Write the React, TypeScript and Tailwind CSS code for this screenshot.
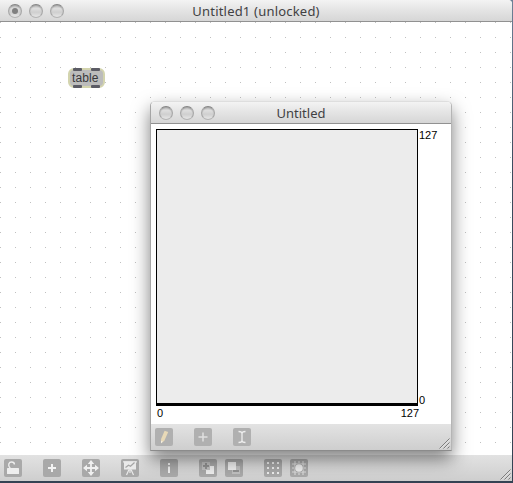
import type { ReactNode } from 'react';

function Lights({ active = false }: { active?: boolean }) {
  return (
    <div className="flex gap-[7px]">
      {[0, 1, 2].map((i) => (
        <span
          key={i}
          className="flex h-[14px] w-[14px] items-center justify-center rounded-full border border-t-[#858585] border-r-[#a6a6a6] border-b-[#b4b4b4] border-l-[#a6a6a6] bg-[linear-gradient(#b9b9b9,#dedede_30%,#cfcfcf_60%,#e6e6e6)] shadow-[inset_0_1px_1px_#a6a6a6]"
        >
          {active && i === 0 && <span className="h-[6px] w-[6px] rounded-full bg-[#808080]" />}
        </span>
      ))}
    </div>
  );
}

function TitleBar({ title, active, className }: { title: string; active?: boolean; className: string }) {
  return (
    <header
      className={
        'grid h-[22px] shrink-0 grid-cols-[1fr_auto_1fr] items-center border-b border-[#919191] bg-[linear-gradient(#f3f3f3,#e8e8e8_35%,#d6d6d6)] px-[8px] ' +
        className
      }
    >
      <Lights active={active} />
      <h1 className="whitespace-nowrap font-['Noto_Sans',sans-serif] text-[13px] leading-[20px] text-[#414143]">
        {title}
      </h1>
    </header>
  );
}

function Tile({ children, dim = false }: { children: ReactNode; dim?: boolean }) {
  return (
    <svg width="18" height="18" viewBox="0 0 18 18" className="block shrink-0" fill="none">
      <rect width="18" height="18" rx="2" fill={dim ? '#b0b0b0' : '#a9a9a9'} />
      {children}
    </svg>
  );
}

function Grip() {
  return (
    <svg width="12" height="12" viewBox="0 0 12 12" className="block self-end" fill="none">
      <path d="M.5 10.5l10-10M4.5 10.5l6-6M8.5 10.5l2-2" stroke="#7c7c7c" />
      <path d="M1.5 10.8l9.3-9.3M5.5 10.8l5.3-5.3" stroke="#eee" strokeWidth=".7" />
    </svg>
  );
}

function PatcherToolbar() {
  return (
    <footer className="flex h-[26px] shrink-0 items-start justify-between bg-[linear-gradient(#e2e2e2,#cecece)]">
      <div className="flex gap-[21px] pt-1 pl-1">
        <Tile>
          <rect x="3" y="9" width="12" height="6" rx=".5" fill="#eee" />
          <path d="M6.2 9.2C3.2 6 5 3 7.6 3c1.8 0 2.8 1 2.8 2.5" stroke="#eee" strokeWidth="1.4" />
        </Tile>
        <Tile>
          <path d="M9 5v8M5 9h8" stroke="#f3f3f3" strokeWidth="2" />
        </Tile>
        <Tile>
          <path d="M9 3v12M3 9h12" stroke="#f0f0f0" strokeWidth="1.8" />
          <path
            d="M9 1L5.8 5h6.4zM9 17l-3.2-4h6.4zM1 9l4-3.2v6.4zM17 9l-4-3.2v6.4z"
            fill="#f0f0f0"
          />
        </Tile>
        <Tile>
          <path d="M3 2.5h12v8H3z" fill="#eaeaea" />
          <path d="M2 2.8h14M9 10v4M8 10.5L5.5 16M10 10.5l2.5 5.5" stroke="#eaeaea" strokeWidth="1.2" />
          <path d="M4.5 8.5l3-2.3 2 1 4-3.7" stroke="#a5a5a5" strokeWidth="1.2" />
        </Tile>
        <Tile>
          <path d="M8 4h2v2H8zM8 7.5h2V14H8z" fill="#f0f0f0" />
        </Tile>
        <div className="flex gap-2">
          <Tile>
            <path d="M7 7h8v8H7z" fill="#eee" />
            <path d="M3 3h8v8H3z" fill="#c0c0c0" />
            <path d="M7 4v6M4 7h6" stroke="#929292" strokeWidth="2" />
          </Tile>
          <Tile>
            <path d="M7 7h8v8H7z" fill="#c0c0c0" />
            <path d="M3 3h8v8H3z" fill="#eee" />
            <path d="M8 12h6" stroke="#929292" strokeWidth="2" />
          </Tile>
        </div>
        <div className="flex gap-2">
          <Tile>
            <path
              d="M3 3h2v2H3zM8 3h2v2H8zM13 3h2v2h-2zM3 8h2v2H3zM8 8h2v2H8zM13 8h2v2h-2zM3 13h2v2H3zM8 13h2v2H8zM13 13h2v2h-2z"
              fill="#eee"
            />
          </Tile>
          <Tile>
            <path d="M5 2v14M9 2v14M13 2v14M2 5h14M2 9h14M2 13h14" stroke="#ddd" strokeWidth="1.1" />
            <circle cx="9" cy="9" r="4.6" fill="#a8a8a8" />
            <circle cx="9" cy="9" r="3.8" fill="#eee" />
          </Tile>
        </div>
      </div>
      <Grip />
    </footer>
  );
}

function Ports({ className }: { className: string }) {
  return (
    <div className={'flex gap-[9px] pl-[5px] ' + className}>
      <span className="h-[3px] w-[9px] shrink-0 rounded-[1px] bg-[#5b5b65]" />
      <span className="h-[3px] w-[9px] shrink-0 rounded-[1px] bg-[#5b5b65]" />
    </div>
  );
}

function TableObject() {
  return (
    <div className="absolute top-[46px] left-[68px] flex h-[20px] w-[37px] flex-col justify-between rounded-[6px] border-2 border-[#d3d4ae] bg-[#bcbcbc] font-['Liberation_Sans',sans-serif] text-[12px] leading-[14px] text-[#38383b]">
      <Ports className="-mt-[2px] -ml-[2px]" />
      <span className="-my-px pl-[2px] tracking-[0.1px]">table</span>
      <Ports className="-mb-[2px] -ml-[2px]" />
    </div>
  );
}

function TableWindow() {
  return (
    <section className="absolute top-[101px] left-[150px] flex h-[350px] w-[302px] flex-col rounded-t-[5px] border border-t-[#dedede] border-r-[#b5b5b5] border-b-[#8b8b8b] border-l-[#a5a5a5] bg-white shadow-[0_8px_18px_rgba(0,0,0,0.5)]">
      <TitleBar title="Untitled" className="rounded-t-[4px]" />
      <div className="grid grow grid-cols-[262px_1fr] grid-rows-[277px_1fr] pt-[5px] pl-[5px] font-['Liberation_Sans',sans-serif] text-[11px] leading-[12px] text-black">
        <div className="border border-b-[3px] border-black bg-[#ececec]" />
        <div className="flex flex-col justify-between pl-px">
          <span>127</span>
          <span>0</span>
        </div>
        <div className="-mr-px flex justify-between pt-px pl-px">
          <span>0</span>
          <span>127</span>
        </div>
      </div>
      <footer className="flex h-[26px] shrink-0 items-start justify-between bg-[linear-gradient(#e3e3e3,#cecece)]">
        <div className="flex gap-[21px] pt-1 pl-1">
          <Tile dim>
            <path d="M9.6 2.8l3.6 1.3-3.8 8.6L6 15.2l.1-4.2z" fill="#e8d9b7" />
            <path d="M6 15.2l.1-2.4 1.8 1z" fill="#f5f0e5" />
          </Tile>
          <Tile dim>
            <path d="M9 4.5v9M4.5 9h9" stroke="#e0e0e0" strokeWidth="1.5" />
          </Tile>
          <Tile dim>
            <path
              d="M5.5 3.5c2 0 3.5.5 3.5 2 0-1.5 1.5-2 3.5-2M9 5v8m-3.5 1.5c2 0 3.5-.5 3.5-2 0 1.5 1.5 2 3.5 2"
              stroke="#eee"
              strokeWidth="1.3"
            />
          </Tile>
        </div>
        <Grip />
      </footer>
    </section>
  );
}

export default function App() {
  return (
    <div className="relative h-[483px] w-[513px] overflow-hidden bg-[linear-gradient(#6e8197,#3c4b5e_35%,#344253)]">
      <main className="flex h-[481px] w-[512px] flex-col rounded-tr-[4px] bg-white">
        <TitleBar title="Untitled1 (unlocked)" active className="rounded-tr-[4px] tracking-[0.2px]" />
        <div className="relative grow">
          <div className="h-full bg-[conic-gradient(from_270deg_at_1px_1px,#c0c0c0_90deg,transparent_0)] bg-[size:15px_15px]" />
          <TableObject />
        </div>
        <PatcherToolbar />
      </main>
      <TableWindow />
    </div>
  );
}
